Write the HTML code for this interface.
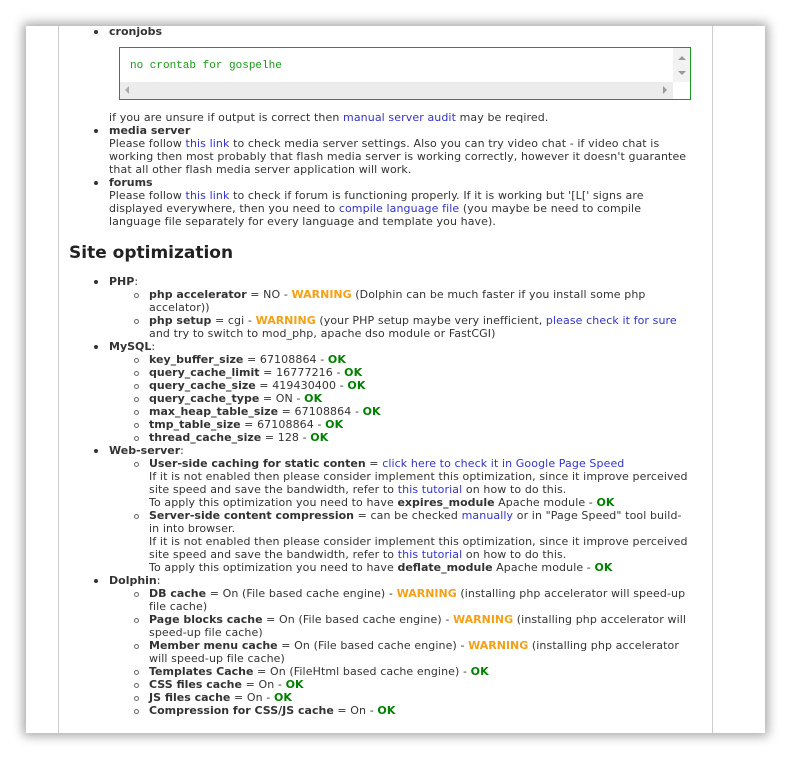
<!DOCTYPE html>
<html><head><meta charset="utf-8"><style>
body{margin:0;width:791px;height:760px;background:#fff;position:relative;overflow:hidden;font-family:"DejaVu Sans",Verdana,sans-serif;font-size:11px;letter-spacing:0.1px;color:#333}
#panel{position:absolute;left:26px;top:26px;width:739px;height:707px;background:#fff;box-shadow:0 0 10px 3px rgba(0,0,0,.35)}
.vl{position:absolute;top:26px;height:707px;width:1px;background:#ccc}
.l{position:absolute;white-space:nowrap;line-height:13px;height:13px}
b{color:#333;letter-spacing:0}
a{color:#3333cc;text-decoration:none}
.w{color:#f5a015;font-weight:bold;letter-spacing:0}
.ok{color:#008000;font-weight:bold}
.d1,.d2{position:absolute}
.d1{width:4px;height:4px;border-radius:50%;background:#333}
.d2{width:3px;height:3px;border-radius:50%;border:1px solid #666}
h2{position:absolute;left:69px;top:241px;margin:0;font-size:17px;letter-spacing:0;font-weight:bold;color:#222;line-height:24px}
#box{position:absolute;left:119px;top:47px;width:570px;height:51px;border:1px solid #1a9a1a;background:#fff}
</style></head><body>
<div id="panel"></div>
<div class="vl" style="left:58px"></div>
<div class="vl" style="left:712px"></div>

<div id="box">
<div style="position:absolute;left:10px;top:12px;font-family:'Liberation Mono',monospace;font-size:11px;letter-spacing:0;color:#1a9a1a">no crontab for gospelhe</div>
<div style="position:absolute;right:0;top:0;width:17px;height:34px;background:#f2f2f2"></div>
<div style="position:absolute;right:4px;top:8px;width:0;height:0;border-left:4px solid transparent;border-right:4px solid transparent;border-bottom:4px solid #999"></div>
<div style="position:absolute;right:4px;top:23px;width:0;height:0;border-left:4px solid transparent;border-right:4px solid transparent;border-top:4px solid #999"></div>
<div style="position:absolute;left:0;top:34px;width:553px;height:17px;background:#ececec"></div>
<div style="position:absolute;left:5px;top:38px;width:0;height:0;border-top:4px solid transparent;border-bottom:4px solid transparent;border-right:4px solid #aaa"></div>
<div style="position:absolute;left:543px;top:38px;width:0;height:0;border-top:4px solid transparent;border-bottom:4px solid transparent;border-left:4px solid #999"></div>
</div>

<div id="c"></div>
<h2>Site optimization</h2>

<script>
var L=[
[25,1,'<b>cronjobs</b>'],
[111,0,'if you are unsure if output is correct then <a>manual server audit</a> may be reqired.'],
[124,1,'<b>media server</b>'],
[137,0,'Please follow <a>this link</a> to check media server settings. Also you can try video chat - if video chat is'],
[150,0,'working then most probably that flash media server is working correctly, however it doesn\'t guarantee'],
[163,0,'that all other flash media server application will work.'],
[176,1,'<b>forums</b>'],
[189,0,'Please follow <a>this link</a> to check if forum is functioning properly. If it is working but \'[L[\' signs are'],
[202,0,'displayed everywhere, then you need to <a>compile language file</a> (you maybe be need to compile'],
[215,0,'language file separately for every language and template you have).'],
[275,1,'<b>PHP</b>:'],
[288,2,'<b>php accelerator</b> = NO - <span class="w">WARNING</span> (Dolphin can be much faster if you install some php'],
[301,3,'accelator))'],
[314,2,'<b>php setup</b> = cgi - <span class="w">WARNING</span> (your PHP setup maybe very inefficient, <a>please check it for sure</a>'],
[327,3,'and try to switch to mod_php, apache dso module or FastCGI)'],
[340,1,'<b>MySQL</b>:'],
[353,2,'<b>key_buffer_size</b> = 67108864 - <span class="ok">OK</span>'],
[366,2,'<b>query_cache_limit</b> = 16777216 - <span class="ok">OK</span>'],
[379,2,'<b>query_cache_size</b> = 419430400 - <span class="ok">OK</span>'],
[392,2,'<b>query_cache_type</b> = ON - <span class="ok">OK</span>'],
[405,2,'<b>max_heap_table_size</b> = 67108864 - <span class="ok">OK</span>'],
[418,2,'<b>tmp_table_size</b> = 67108864 - <span class="ok">OK</span>'],
[431,2,'<b>thread_cache_size</b> = 128 - <span class="ok">OK</span>'],
[444,1,'<b>Web-server</b>:'],
[457,2,'<b>User-side caching for static conten</b> = <a>click here to check it in Google Page Speed</a>'],
[470,3,'If it is not enabled then please consider implement this optimization, since it improve perceived'],
[483,3,'site speed and save the bandwidth, refer to <a>this tutorial</a> on how to do this.'],
[496,3,'To apply this optimization you need to have <b>expires_module</b> Apache module - <span class="ok">OK</span>'],
[509,2,'<b>Server-side content compression</b> = can be checked <a>manually</a> or in "Page Speed" tool build-'],
[522,3,'in into browser.'],
[535,3,'If it is not enabled then please consider implement this optimization, since it improve perceived'],
[548,3,'site speed and save the bandwidth, refer to <a>this tutorial</a> on how to do this.'],
[561,3,'To apply this optimization you need to have <b>deflate_module</b> Apache module - <span class="ok">OK</span>'],
[574,1,'<b>Dolphin</b>:'],
[587,2,'<b>DB cache</b> = On (File based cache engine) - <span class="w">WARNING</span> (installing php accelerator will speed-up'],
[600,3,'file cache)'],
[613,2,'<b>Page blocks cache</b> = On (File based cache engine) - <span class="w">WARNING</span> (installing php accelerator will'],
[626,3,'speed-up file cache)'],
[639,2,'<b>Member menu cache</b> = On (File based cache engine) - <span class="w">WARNING</span> (installing php accelerator'],
[652,3,'will speed-up file cache)'],
[665,2,'<b>Templates Cache</b> = On (FileHtml based cache engine) - <span class="ok">OK</span>'],
[678,2,'<b>CSS files cache</b> = On - <span class="ok">OK</span>'],
[691,2,'<b>JS files cache</b> = On - <span class="ok">OK</span>'],
[704,2,'<b>Compression for CSS/JS cache</b> = On - <span class="ok">OK</span>']
];
var h='';
L.forEach(function(r){
 var y=r[0],t=r[1],x=(t<2)?109:149;
 h+='<div class="l" style="left:'+x+'px;top:'+y+'px">'+r[2]+'</div>';
 if(t==1)h+='<div class="d1" style="left:94px;top:'+(y+5)+'px"></div>';
 if(t==2)h+='<div class="d2" style="left:134px;top:'+(y+5)+'px"></div>';
});
document.getElementById('c').innerHTML=h;
</script>
</body></html>
